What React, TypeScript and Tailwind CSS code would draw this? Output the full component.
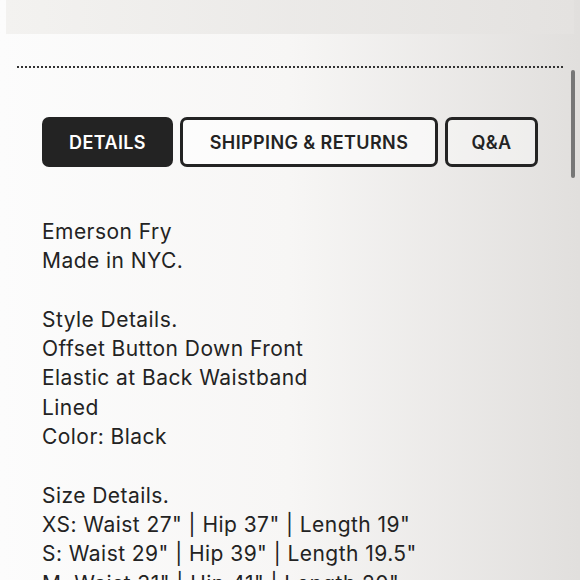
export default function App() {
  const lines: string[] = [
    "Emerson Fry",
    "Made in NYC.",
    "",
    "Style Details.",
    "Offset Button Down Front",
    "Elastic at Back Waistband",
    "Lined",
    "Color: Black",
    "",
    "Size Details.",
    'XS: Waist 27" | Hip 37" | Length 19"',
    'S: Waist 29" | Hip 39" | Length 19.5"',
    'M: Waist 31" | Hip 41" | Length 20"',
  ];
  return (
    <div
      className="relative h-[580px] w-[580px] overflow-hidden bg-gradient-to-r from-[#fcfcfc] via-[#f7f6f5] to-[#e1dfdd] text-[#232323]"
      style={{ fontFamily: "Inter, 'Liberation Sans', sans-serif" }}
    >
      <div className="mx-[6px] h-[34px] bg-gradient-to-r from-[#f3f2f0] to-[#e4e2e0]" />
      <div className="mx-[17px] mt-[32px] border-t-2 border-dotted border-[#333]" />
      <div className="absolute right-[5px] top-[70px] h-[108px] w-[4px] rounded-sm bg-[#777]" />
      <div className="mt-[49px] flex gap-[7px] pl-[42px]">
        <div className="flex h-[50px] w-[131px] items-center justify-center rounded-[7px] bg-[#232323] text-[18px] font-semibold tracking-[0.4px] text-white">
          DETAILS
        </div>
        <div className="flex h-[50px] w-[258px] items-center justify-center rounded-[7px] border-[3px] border-[#232323] bg-white/60 text-[18px] font-semibold tracking-[0.4px]">
          SHIPPING &amp; RETURNS
        </div>
        <div className="flex h-[50px] w-[93px] items-center justify-center rounded-[7px] border-[3px] border-[#232323] bg-white/40 text-[18px] font-semibold tracking-[0.4px]">
          Q&amp;A
        </div>
      </div>
      <div className="mt-[50px] pl-[42px] text-[21px] leading-[29.3px] tracking-[0.45px]">
        {lines.map((l, i) => (
          <div key={i} className="h-[29.3px] whitespace-pre">
            {l}
          </div>
        ))}
      </div>
    </div>
  );
}
